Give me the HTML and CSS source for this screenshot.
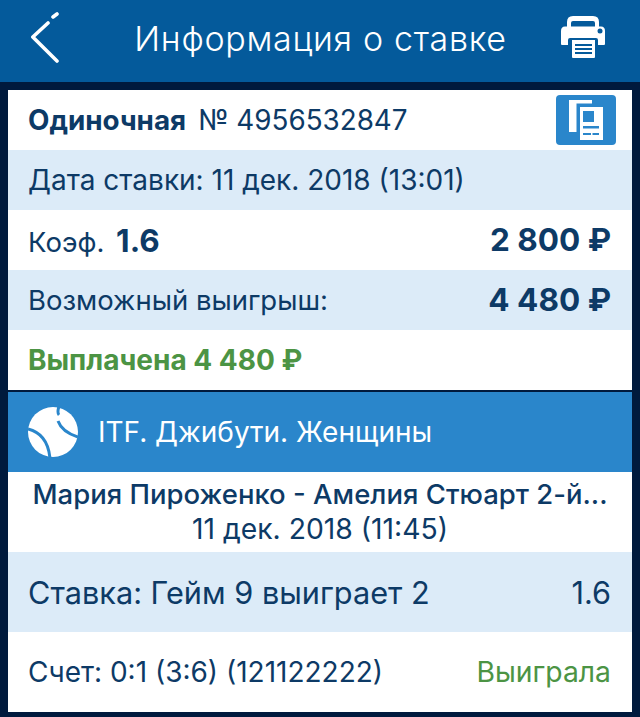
FILE: index.html
```html
<!DOCTYPE html>
<html lang="ru">
<head>
	<meta charset="UTF-8">
	<title>Информация о ставке</title>
	<link rel="stylesheet" href="styles.css">
</head>
<body>
	<div class="header">
		<svg class="back" width="32" height="52" viewBox="0 0 32 52">
			<path d="M26 2 L22 5 M17 11 L1.800 25 L26 49" fill="none" stroke="#fff" stroke-width="3.600" stroke-linecap="round" stroke-linejoin="round"/>
		</svg>
		<div class="title">Информация о ставке</div>
		<svg class="printer" width="46" height="44" viewBox="0 0 46 44">
			<path d="M7 12 V7 Q7 1 13 1 H33 Q39 1 39 7 V12 H35 V8 Q35 6 33 6 H13 Q11 6 11 8 V12 Z" fill="#fff"/>
			<path d="M5 11.500 H41 Q45 11.500 45 16 V29 Q45 30 44 30 H38 V25 Q38 23 36 23 H10 Q8 23 8 25 V30 H2 Q1 30 1 29 V16 Q1 11.500 5 11.500 Z" fill="#fff"/>
			<circle cx="40" cy="16" r="2.500" fill="#045a9b"/>
			<path d="M12 25 H35 V42 Q35 43 34 43 H13 Q12 43 12 42 Z" fill="#fff"/>
			<path d="M15 29 H32 V31 H15 Z M15 33 H32 V35 H15 Z M15 37 H32 V39 H15 Z" fill="#045a9b"/>
		</svg>
	</div>

	<div class="card">
		<div class="row row-head">
			<div class="bet-id"><b>Одиночная</b><span>№ 4956532847</span></div>
			<div class="copy-btn">
				<svg width="40" height="44" viewBox="0 0 40 44">
					<rect x="3" y="2" width="23" height="32" fill="#fff"/>
					<rect x="10.500" y="5.500" width="26.500" height="36.500" fill="#2a86cb"/>
					<rect x="14" y="9" width="23" height="33" fill="#fff"/>
					<rect x="17" y="13" width="11" height="11" fill="#2a86cb"/>
					<rect x="17" y="28" width="16" height="2.500" fill="#2a86cb"/>
					<rect x="17" y="35" width="8" height="2" fill="#2a86cb"/>
					<rect x="26.500" y="35" width="6.500" height="2" fill="#2a86cb"/>
				</svg>
			</div>
		</div>
		<div class="row light">Дата ставки: 11 дек. 2018 (13:01)</div>
		<div class="row">
			<div class="coef">Коэф. <b>1.6</b></div>
			<div class="amount">2 800 ₽</div>
		</div>
		<div class="row light">
			<div class="possible">Возможный выигрыш:</div>
			<div class="amount">4 480 ₽</div>
		</div>
		<div class="row paid">Выплачена 4 480 ₽</div>

		<div class="sport">
			<svg width="50" height="50" viewBox="0 0 50 50">
				<circle cx="25" cy="25" r="25" fill="#fff"/>
				<path d="M31 -1 Q29 6 31 8 M30 14 Q34 25 50 30" fill="none" stroke="#2a86cb" stroke-width="3"/>
				<path d="M0 22 Q20 27 22 52" fill="none" stroke="#2a86cb" stroke-width="3"/>
			</svg>
			<div>ITF. Джибути. Женщины</div>
		</div>

		<div class="event">
			<div class="event-name">Мария Пироженко - Амелия Стюарт 2-й...</div>
			<div class="event-date">11 дек. 2018 (11:45)</div>
		</div>
		<div class="row row-tall light stake">
			<div>Ставка: Гейм 9 выиграет 2</div>
			<div>1.6</div>
		</div>
		<div class="row row-tall score">
			<div>Счет: 0:1 (3:6) (121122222)</div>
			<div class="won">Выиграла</div>
		</div>
	</div>
</body>
</html>
```

FILE: styles.css
```css
* {
	margin: 0;
	padding: 0;
	box-sizing: border-box;
}
body {
	background: #001a3d;
	font-family: Inter, "Liberation Sans", sans-serif;
	color: #0d3a66;
	height: 717px;
	overflow: hidden;
}
.header {
	height: 82px;
	background: #045a9b;
	display: flex;
	align-items: center;
	padding: 0 34px 0 31px;
	color: #fff;
}
.back {
	margin-bottom: 6px;
}
.printer {
	margin-bottom: 8px;
}
.title {
	flex: 1;
	text-align: center;
	font-size: 34px;
	font-weight: 300;
	letter-spacing: 0.7px;
	padding: 0 0 6px 18px;
}
.card {
	margin: 8px 8px 0;
	background: #fff;
}
.row {
	height: 60px;
	display: flex;
	align-items: center;
	justify-content: space-between;
	padding: 0 21px 0 20px;
	font-size: 28px;
}
.light {
	background: #dcebf8;
}
.row-head {
	padding-right: 16px;
}
.bet-id {
	display: flex;
	gap: 12px;
	font-size: 27.800px;
}
.copy-btn {
	width: 60px;
	height: 50px;
	background: #2a86cb;
	border-radius: 4px;
	display: flex;
	align-items: center;
	justify-content: center;
}
.coef {
	font-size: 27.5px;
}
.coef b {
	font-size: 31.5px;
	margin-left: 4px;
}
.possible {
	font-size: 27.5px;
}
.amount {
	font-size: 31.5px;
	font-weight: 700;
	padding-bottom: 2px;
}
.paid {
	color: #4c9444;
	font-weight: 700;
}
.sport {
	margin-top: 2px;
	box-shadow: 0 -2px 0 #001a3d;
	height: 80px;
	background: #2a86cb;
	color: #fff;
	display: flex;
	align-items: center;
	gap: 20px;
	padding-left: 20px;
	font-size: 28px;
}
.event {
	height: 80px;
	text-align: center;
	font-size: 28.300px;
	padding-top: 5px;
	line-height: 35px;
}
.event-name {
	font-size: 27.5px;
	font-weight: 500;
}
.row-tall {
	height: 80px;
}
.stake {
	font-size: 30.700px;
}
.won {
	color: #4c9444;
	font-size: 28.300px;
}
```
